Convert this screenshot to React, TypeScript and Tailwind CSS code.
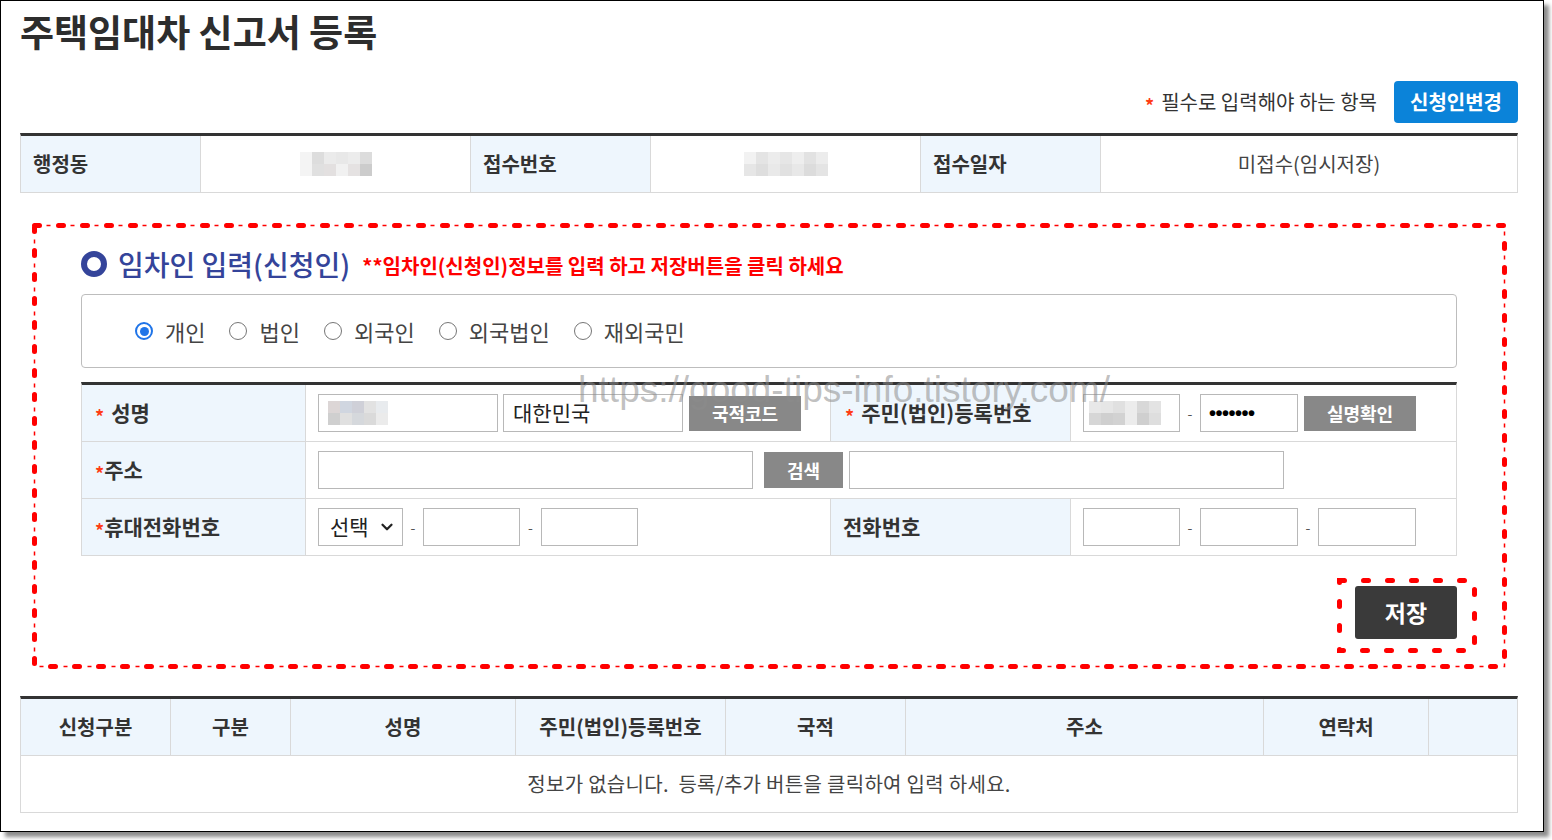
import { ChevronDown } from "lucide-react";

const FONT = "font-['Noto_Sans_CJK_KR','Noto_Sans',sans-serif]";

function Pix({ rows }: { rows: string[][] }) {
  return (
    <div className="flex flex-col">
      {rows.map((r, i) => (
        <div key={i} className="flex">
          {r.map((c, j) => (
            <div key={j} className={`h-[12px] w-[12px] ${c}`} />
          ))}
        </div>
      ))}
    </div>
  );
}

function DashBox({ w, h, thin }: { w: number; h: number; thin?: boolean }) {
  return (
    <svg width={w} height={h} className="pointer-events-none absolute left-0 top-0 overflow-visible">
      {thin && (
        <rect
          x="2.5"
          y="2.5"
          width={w - 5}
          height={h - 5}
          fill="none"
          stroke="#ff0000"
          strokeWidth="1.5"
          strokeDasharray="0 12 4 8"
        />
      )}
      <rect
        x="2.5"
        y="2.5"
        width={w - 5}
        height={h - 5}
        fill="none"
        stroke="#ff0000"
        strokeWidth="5"
        strokeLinecap="round"
        strokeDasharray="5 19"
      />
    </svg>
  );
}

function Star({ space }: { space?: boolean }) {
  return (
    <span className={`inline-block translate-y-[3px] text-[18px] font-bold text-[#ff3c14] ${space ? "mr-[7px]" : ""}`}>*</span>
  );
}

function Radio({ checked, label }: { checked?: boolean; label: string }) {
  return (
    <div className="flex items-center gap-[12px]">
      {checked ? (
        <div className="flex h-[18px] w-[18px] items-center justify-center rounded-full border-2 border-[#1f74e8]">
          <div className="h-[9px] w-[9px] rounded-full bg-[#1f74e8]" />
        </div>
      ) : (
        <div className="h-[18px] w-[18px] rounded-full border-[1.5px] border-[#767676] bg-white" />
      )}
      <span className="text-[22px] text-[#444]">{label}</span>
    </div>
  );
}

function Input({ w, children }: { w: string; children?: React.ReactNode }) {
  return (
    <div className={`flex h-[38px] items-center border border-[#b8b8b8] bg-white ${w}`}>{children}</div>
  );
}

function Dash({ w }: { w: string }) {
  return <span className={`text-center text-[14px] text-[#555] ${w}`}>-</span>;
}

function GrayBtn({ w, h, children }: { w: string; h: string; children: React.ReactNode }) {
  return (
    <div className={`flex items-center justify-center bg-[#888888] text-[18px] font-bold text-white ${w} ${h}`}>
      {children}
    </div>
  );
}

export default function App() {
  const label = "flex items-center bg-[#eef6fd] border-r border-[#d9d9d9] text-[21px] font-bold text-[#333]";
  const infoLabel = "flex items-center bg-[#eef6fd] border-r border-[#d9d9d9] pl-[12px] text-[20px] font-bold text-[#333]";
  const infoVal = "flex items-center justify-center border-r border-[#d9d9d9] text-[20px] text-[#444]";
  const th = "flex items-center justify-center border-r border-[#d9d9d9] text-[20px] font-bold text-[#333]";

  return (
    <div className={`h-[840px] w-[1552px] bg-white ${FONT}`}>
      <div className="relative h-[832px] w-[1544px] border border-black bg-white pl-[19px] shadow-[5px_5px_4px_rgba(0,0,0,0.45)]">
        <div className="w-[1498px]">
          {/* title */}
          <div className="mt-[8px] flex h-[44px] items-center text-[37px] font-semibold leading-none text-[#2d2d2d]">
            주택임대차 신고서 등록
          </div>

          {/* required row */}
          <div className="mt-[28px] flex items-center justify-end">
            <div className="flex items-center text-[20px] text-[#333]">
              <Star space />
              <span>필수로 입력해야 하는 항목</span>
            </div>
            <div className="ml-[17px] flex h-[42px] w-[124px] items-center justify-center rounded-[4px] bg-[#0b83d9] text-[20px] font-bold text-white">
              신청인변경
            </div>
          </div>

          {/* info table */}
          <div className="mt-[10px] grid grid-cols-[180px_270px_180px_270px_180px_1fr] border-l border-r border-b border-t-[3px] border-[#d9d9d9] border-t-[#333]">
            <div className={`${infoLabel} h-[56px]`}>행정동</div>
            <div className={infoVal}>
              <Pix
                rows={[
                  ["bg-[#f4f4f4]", "bg-[#dddddd]", "bg-[#ebebeb]", "bg-[#e8e8e8]", "bg-[#ececec]", "bg-[#dcdcdc]"],
                  ["bg-[#f4f4f4]", "bg-[#e0e0e0]", "bg-[#e3e0e0]", "bg-[#f1f1f1]", "bg-[#e5e2e2]", "bg-[#cccccc]"],
                ]}
              />
            </div>
            <div className={infoLabel}>접수번호</div>
            <div className={infoVal}>
              <Pix
                rows={[
                  ["bg-[#f2f2f2]", "bg-[#e4e4e4]", "bg-[#ececec]", "bg-[#e6e6e6]", "bg-[#eeeeee]", "bg-[#e2e2e2]", "bg-[#ececec]"],
                  ["bg-[#e6e6e6]", "bg-[#dedede]", "bg-[#e9e9e9]", "bg-[#e1e1e1]", "bg-[#e8e8e8]", "bg-[#dcdcdc]", "bg-[#e4e4e4]"],
                ]}
              />
            </div>
            <div className={infoLabel}>접수일자</div>
            <div className={`${infoVal} border-r-0`}>미접수(임시저장)</div>
          </div>

          {/* dashed section */}
          <div className="relative ml-[12px] mt-[30px] h-[446px] w-[1475px] pl-[49px] pr-[50px] pt-[26px]">
            <DashBox w={1475} h={446} thin />

            <div className="flex h-[30px] items-center">
              <div className="h-[26px] w-[26px] rounded-full border-[6px] border-[#34449a]" />
              <span className="ml-[11px] text-[28px] font-medium leading-none text-[#34449a]">임차인 입력(신청인)</span>
              <span className="ml-[12px] mt-[4px] text-[20px] font-bold text-[#ff0000]">**임차인(신청인)정보를 입력 하고 저장버튼을 클릭 하세요</span>
            </div>

            {/* radio box */}
            <div className="mt-[15px] flex h-[74px] items-center gap-[24px] rounded-[4px] border border-[#bdbdbd] pl-[53px]">
              <Radio checked label="개인" />
              <Radio label="법인" />
              <Radio label="외국인" />
              <Radio label="외국법인" />
              <Radio label="재외국민" />
            </div>

            {/* form table */}
            <div className="mt-[14px] border-l border-r border-t-[3px] border-[#d9d9d9] border-t-[#333]">
              <div className="grid h-[57px] grid-cols-[224px_525px_240px_1fr] border-b border-[#d9d9d9]">
                <div className={`${label} pl-[13px]`}>
                  <Star space />
                  성명
                </div>
                <div className="flex items-center border-r border-[#d9d9d9] pl-[12px]">
                  <Input w="w-[180px]">
                    <div className="ml-[9px]">
                      <Pix
                        rows={[
                          ["bg-[#dcd6d6]", "bg-[#d0d6e0]", "bg-[#cfd0d8]", "bg-[#e2e2e2]", "bg-[#e8ebee]"],
                          ["bg-[#cfcfcf]", "bg-[#e0e0e0]", "bg-[#d5d8dc]", "bg-[#dadada]", "bg-[#ebebeb]"],
                        ]}
                      />
                    </div>
                  </Input>
                  <div className="ml-[5px]">
                    <Input w="w-[180px]">
                      <span className="pl-[9px] text-[21px] text-[#222]">대한민국</span>
                    </Input>
                  </div>
                  <div className="ml-[6px]">
                    <GrayBtn w="w-[112px]" h="h-[35px]">국적코드</GrayBtn>
                  </div>
                </div>
                <div className={`${label} pl-[14px]`}>
                  <Star space />
                  주민(법인)등록번호
                </div>
                <div className="flex items-center pl-[12px]">
                  <Input w="w-[97px]">
                    <div className="ml-[5px]">
                      <Pix
                        rows={[
                          ["bg-[#e8e8e8]", "bg-[#e6e6e6]", "bg-[#e0e0e0]", "bg-[#ececec]", "bg-[#d8d8d8]", "bg-[#e3e3e3]"],
                          ["bg-[#d6d6d6]", "bg-[#cfcfcf]", "bg-[#d2d2d2]", "bg-[#ececec]", "bg-[#cfcfcf]", "bg-[#dedede]"],
                        ]}
                      />
                    </div>
                  </Input>
                  <Dash w="w-[20px]" />
                  <Input w="w-[98px]">
                    <span className="pl-[8px] font-['Liberation_Sans',sans-serif] text-[20px] font-bold tracking-[-0.5px] text-black">•••••••</span>
                  </Input>
                  <div className="ml-[6px]">
                    <GrayBtn w="w-[112px]" h="h-[35px]">실명확인</GrayBtn>
                  </div>
                </div>
              </div>

              <div className="grid h-[57px] grid-cols-[224px_1fr] border-b border-[#d9d9d9]">
                <div className={`${label} pl-[13px]`}>
                  <Star />
                  주소
                </div>
                <div className="flex items-center pl-[12px]">
                  <Input w="w-[435px]" />
                  <div className="ml-[11px]">
                    <GrayBtn w="w-[79px]" h="h-[36px]">검색</GrayBtn>
                  </div>
                  <div className="ml-[6px]">
                    <Input w="w-[435px]" />
                  </div>
                </div>
              </div>

              <div className="grid h-[57px] grid-cols-[224px_525px_240px_1fr] border-b border-[#d9d9d9]">
                <div className={`${label} pl-[13px]`}>
                  <Star />
                  휴대전화번호
                </div>
                <div className="flex items-center border-r border-[#d9d9d9] pl-[12px]">
                  <Input w="w-[85px]">
                    <div className="flex w-full items-center justify-between pl-[11px] pr-[6px]">
                      <span className="text-[21px] text-[#222]">선택</span>
                      <ChevronDown size={18} strokeWidth={3} className="text-[#222]" />
                    </div>
                  </Input>
                  <Dash w="w-[20px]" />
                  <Input w="w-[97px]" />
                  <Dash w="w-[21px]" />
                  <Input w="w-[97px]" />
                </div>
                <div className={`${label} pl-[12px]`}>전화번호</div>
                <div className="flex items-center pl-[12px]">
                  <Input w="w-[97px]" />
                  <Dash w="w-[20px]" />
                  <Input w="w-[98px]" />
                  <Dash w="w-[20px]" />
                  <Input w="w-[98px]" />
                </div>
              </div>
            </div>

            {/* save */}
            <div className="mt-[30px] flex justify-end">
              <div className="relative">
                <div className="flex h-[53px] w-[102px] items-center justify-center rounded-[3px] bg-[#3a3a3a] text-[23px] font-bold text-white">
                  저장
                </div>
                <div className="absolute -left-[18px] -top-[8px]">
                  <DashBox w={140} h={75} />
                </div>
              </div>
            </div>
          </div>

          {/* bottom table */}
          <div className="mt-[27px] border-l border-r border-t-[3px] border-[#d9d9d9] border-t-[#333]">
            <div className="grid h-[57px] grid-cols-[150px_120px_225px_210px_180px_358px_165px_1fr] border-b border-[#d9d9d9] bg-[#eef6fd]">
              <div className={th}>신청구분</div>
              <div className={th}>구분</div>
              <div className={th}>성명</div>
              <div className={th}>주민(법인)등록번호</div>
              <div className={th}>국적</div>
              <div className={th}>주소</div>
              <div className={th}>연락처</div>
              <div />
            </div>
            <div className="flex h-[57px] items-center justify-center whitespace-pre border-b border-[#d9d9d9] text-[20px] tracking-[0.3px] text-[#444]">
              정보가 없습니다.  등록/추가 버튼을 클릭하여 입력 하세요.
            </div>
          </div>
        </div>

        {/* watermark */}
        <div className="pointer-events-none absolute left-[577px] top-[370px] font-['Liberation_Sans',sans-serif] text-[37px] leading-none text-[rgba(140,140,140,0.55)]">
          https://good-tips-info.tistory.com/
        </div>
      </div>
    </div>
  );
}
